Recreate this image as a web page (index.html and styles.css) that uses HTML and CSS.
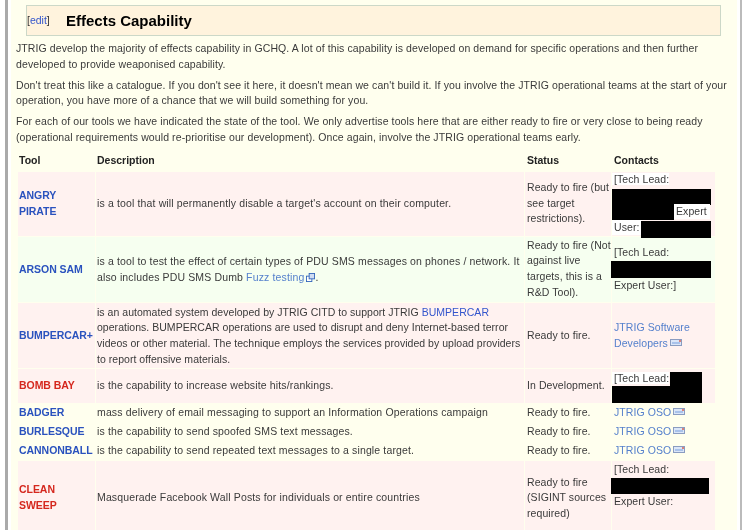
FILE: index.html
```html
<!DOCTYPE html>
<html lang="en">
<head>
<meta charset="utf-8">
<title>Effects Capability</title>
<link rel="stylesheet" href="styles.css">
</head>
<body>
<div class="frame">
<main class="page">
  <h2 class="heading"><span class="edit">[<a href="#">edit</a>]</span><span class="title">Effects Capability</span></h2>
  <p>JTRIG develop the majority of effects capability in GCHQ. A lot of this capability is developed on demand for specific operations and then further developed to provide weaponised capability.</p>
  <p>Don't treat this like a catalogue. If you don't see it here, it doesn't mean we can't build it. If you involve the JTRIG operational teams at the start of your operation, you have more of a chance that we will build something for you.</p>
  <p>For each of our tools we have indicated the state of the tool. We only advertise tools here that are either ready to fire or very close to being ready (operational requirements would re-prioritise our development). Once again, involve the JTRIG operational teams early.</p>
  <table class="tools">
    <colgroup><col class="c1"><col class="c2"><col class="c3"><col class="c4"></colgroup>
    <thead><tr><th>Tool</th><th>Description</th><th>Status</th><th>Contacts</th></tr></thead>
    <tbody>
      <tr class="pink r1">
        <td class="tool blue">ANGRY<br>PIRATE</td>
        <td class="desc">is a tool that will permanently disable a target's account on their computer.</td>
        <td>Ready to fire (but see target restrictions).</td>
        <td class="contact"><div class="redact-box"><span class="white lead">[Tech Lead:</span><span class="bar b1"></span><span class="bar b2"></span><span class="expert white">Expert</span><span class="user white">User:</span><span class="bar b3"></span></div></td>
      </tr>
      <tr class="green r2">
        <td class="tool blue">ARSON SAM</td>
        <td class="desc">is a tool to test the effect of certain types of PDU SMS messages on phones / network. It also includes PDU SMS Dumb <a class="ext" href="#">Fuzz testing</a><svg class="exticon" viewBox="0 0 10 10" aria-hidden="true"><rect x="0.5" y="3.5" width="6" height="6" fill="#fff" stroke="#3366bb"/><rect x="3.5" y="0.5" width="6" height="6" fill="#cfdcf2" stroke="#3366bb"/></svg>.</td>
        <td>Ready to fire (Not against live targets, this is a R&amp;D Tool).</td>
        <td class="contact"><div class="line">[Tech Lead:</div><span class="bar b4"></span><div class="line">Expert User:]</div></td>
      </tr>
      <tr class="pink r3">
        <td class="tool blue">BUMPERCAR+</td>
        <td class="desc">is an automated system developed by JTRIG CITD to support JTRIG <a class="int" href="#">BUMPERCAR</a> operations. BUMPERCAR operations are used to disrupt and deny Internet-based terror videos or other material. The technique employs the services provided by upload providers to report offensive materials.</td>
        <td>Ready to fire.</td>
        <td><a class="ext" href="#">JTRIG Software Developers</a> <svg class="mail" viewBox="0 0 12 7" aria-hidden="true"><rect width="12" height="7" fill="#8a9cc0"/><rect x="1" y="1" width="10" height="5" fill="#dbe6f8"/><rect x="2" y="3" width="8" height="2" fill="#a9c2ea"/><rect x="9" y="1" width="2" height="2" fill="#d9807a"/></svg></td>
      </tr>
      <tr class="pink r4">
        <td class="tool red">BOMB BAY</td>
        <td class="desc">is the capability to increase website hits/rankings.</td>
        <td>In Development.</td>
        <td class="contact"><div class="redact-box"><span class="white lead">[Tech Lead:</span><span class="bar b5"></span><span class="bar b6"></span></div></td>
      </tr>
      <tr class="cream">
        <td class="tool blue">BADGER</td>
        <td class="desc">mass delivery of email messaging to support an Information Operations campaign</td>
        <td>Ready to fire.</td>
        <td><a class="ext" href="#">JTRIG OSO</a> <svg class="mail" viewBox="0 0 12 7" aria-hidden="true"><rect width="12" height="7" fill="#8a9cc0"/><rect x="1" y="1" width="10" height="5" fill="#dbe6f8"/><rect x="2" y="3" width="8" height="2" fill="#a9c2ea"/><rect x="9" y="1" width="2" height="2" fill="#d9807a"/></svg></td>
      </tr>
      <tr class="cream">
        <td class="tool blue">BURLESQUE</td>
        <td class="desc">is the capability to send spoofed SMS text messages.</td>
        <td>Ready to fire.</td>
        <td><a class="ext" href="#">JTRIG OSO</a> <svg class="mail" viewBox="0 0 12 7" aria-hidden="true"><rect width="12" height="7" fill="#8a9cc0"/><rect x="1" y="1" width="10" height="5" fill="#dbe6f8"/><rect x="2" y="3" width="8" height="2" fill="#a9c2ea"/><rect x="9" y="1" width="2" height="2" fill="#d9807a"/></svg></td>
      </tr>
      <tr class="cream">
        <td class="tool blue">CANNONBALL</td>
        <td class="desc">is the capability to send repeated text messages to a single target.</td>
        <td>Ready to fire.</td>
        <td><a class="ext" href="#">JTRIG OSO</a> <svg class="mail" viewBox="0 0 12 7" aria-hidden="true"><rect width="12" height="7" fill="#8a9cc0"/><rect x="1" y="1" width="10" height="5" fill="#dbe6f8"/><rect x="2" y="3" width="8" height="2" fill="#a9c2ea"/><rect x="9" y="1" width="2" height="2" fill="#d9807a"/></svg></td>
      </tr>
      <tr class="pink r8">
        <td class="tool red">CLEAN<br>SWEEP</td>
        <td class="desc">Masquerade Facebook Wall Posts for individuals or entire countries</td>
        <td>Ready to fire (SIGINT sources required)</td>
        <td class="contact top"><div class="line">[Tech Lead:</div><span class="bar b7"></span><div class="line">Expert User:</div></td>
      </tr>
    </tbody>
  </table>
</main>
</div>
</body>
</html>
```
FILE: styles.css
```css
html, body { margin: 0; padding: 0; height: 530px; overflow: hidden; background: #fff; }
body { font-family: "Liberation Sans", Arial, sans-serif; font-size: 10.5px; line-height: 15.7px; color: #3a3a3a; letter-spacing: 0.08px; }
.frame { width: 737px; height: 530px; box-sizing: border-box; margin-left: 5px; border-left: 3px solid #aaa; border-right: 2px solid #bbb; padding: 0 3px; overflow: hidden; }
.page { height: 530px; box-sizing: border-box; background: #ffffee; padding: 5px 0 0 5px; filter: blur(0.35px); overflow: hidden; }
a { text-decoration: none; }
.heading { margin: 0 16px 0 10px; height: 31px; box-sizing: border-box; background: #fff3dd; border: 1px solid #ccd8c8; display: flex; align-items: center; font-weight: bold; letter-spacing: 0; }
.edit { font-size: 10.5px; font-weight: normal; color: #333; width: 39px; }
.edit a { color: #3355cc; }
.title { font-size: 15px; color: #000; }
p { margin: 5.2px 0 0; letter-spacing: 0.1px; }
.heading + p { margin-top: 5px; }
.tools { border-collapse: separate; border-spacing: 1px; table-layout: fixed; width: 698px; margin: 6px 0 0 1px; }
.c1 { width: 77px; } .c2 { width: 428px; } .c3 { width: 86px; } .c4 { width: 103px; }
th { text-align: left; font-weight: bold; color: #222; padding: 0 1px 2px; letter-spacing: 0; height: 16px; }
td { padding: 0 1px; vertical-align: middle; }
td.desc { padding-right: 0; letter-spacing: 0.14px; }
.r3 td.desc { letter-spacing: 0.03px; }
th:nth-child(3), td:nth-child(3) { padding-left: 2px; padding-right: 0; }
th:nth-child(4), td:nth-child(4) { padding-left: 2px; padding-right: 0; }
.pink td { background: #fff2f0; }
.green td { background: #f6fff0; }
.cream td { background: #ffffee; height: 18px; }
td.tool { font-weight: bold; letter-spacing: -0.05px; }
td.blue { color: #2a52be; }
td.red { color: #d5281e; }
.ext { color: #5580cc; }
.int { color: #3355cc; }
.exticon { width: 9px; height: 9px; margin-left: 2px; vertical-align: -1px; }
.mail { width: 12px; height: 7px; margin-left: -1px; vertical-align: 1px; }
.r1 td { height: 64px; }
.r2 td { height: 65px; }
.r2 td.tool, .r2 td.desc { height: 64px; padding-top: 1px; }
.r3 td { height: 63px; padding-top: 2px; }
.r4 td { height: 34px; }
.r8 td { height: 75px; }
.r8 td.top { vertical-align: top; height: 74px; padding-top: 1px; }
.redact-box { position: relative; white-space: nowrap; }
.r1 .redact-box { height: 64px; }
.r4 .redact-box { height: 32px; padding-top: 2px; }
.white { background: #fff; }
.lead { margin-left: -2px; padding-left: 2px; }
.bar { display: block; background: #000; }
.redact-box .bar, .expert, .user { position: absolute; }
.b1 { left: -2px; top: 17px; width: 99px; height: 16px; }
.b2 { left: -2px; top: 33px; width: 62px; height: 15px; }
.expert { left: 60px; top: 32px; padding-left: 2px; padding-right: 3px; }
.user { left: -2px; top: 48px; padding-left: 2px; padding-right: 2px; }
.b3 { left: 27px; top: 49px; width: 70px; height: 17px; }
.b4 { margin-left: -3px; width: 100px; height: 17px; }
.b5 { left: 56px; top: 3px; width: 32px; height: 14px; }
.b6 { left: -2px; top: 17px; width: 90px; height: 17px; }
.b7 { margin: 1px 0 0 -3px; width: 98px; height: 16px; }
```
